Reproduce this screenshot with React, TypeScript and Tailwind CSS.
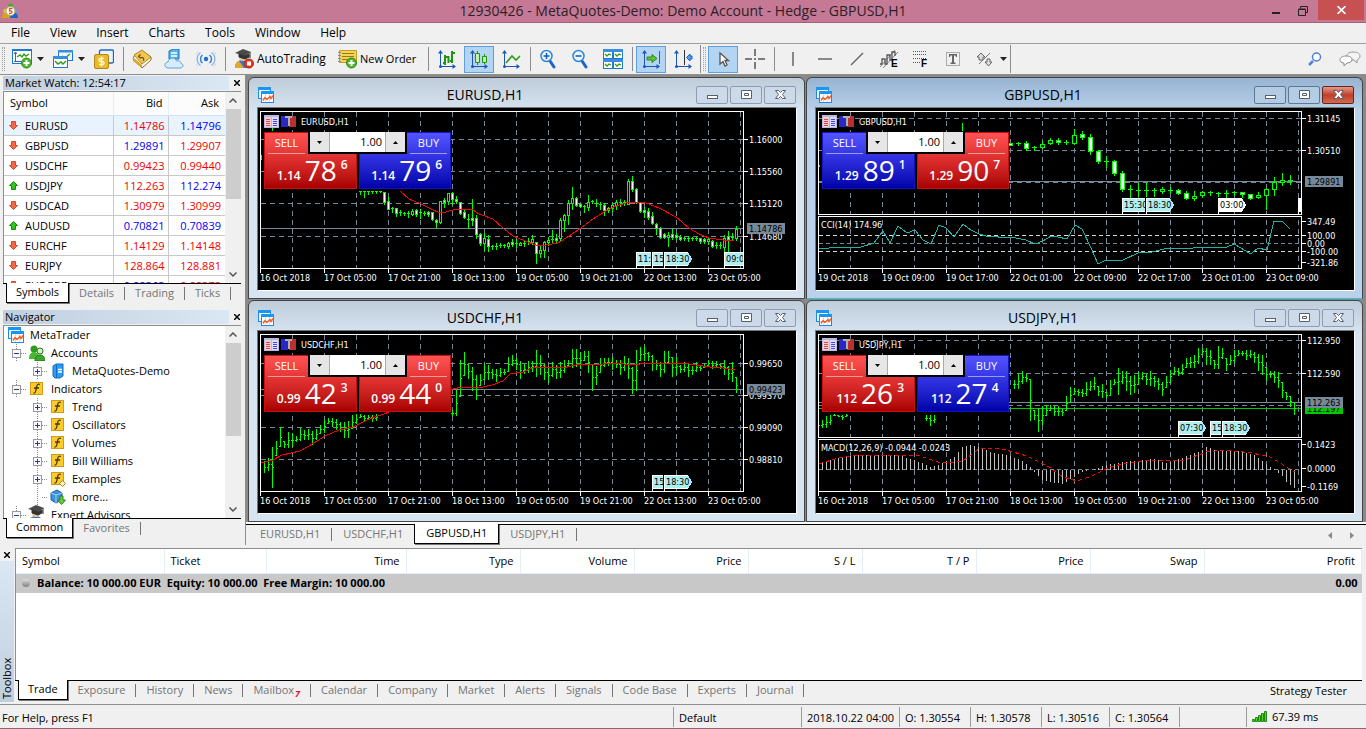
import React, { useState } from 'react';

type Candle = [high: number, low: number, top: number, bottom: number, bull?: 1];
type Bar = [high: number, low: number];

interface Tag {
  x: number;
  y: number;
  w: number;
  label: string;
  white?: boolean;
}

interface ChartInfo {
  symbol: string;
  active?: boolean;
  times: string[];
  hLines: number[];
  labels: [number, string][];
  priceY: number;
  price: string;
  sell: [string, string, string, 'red' | 'blue'];
  buy: [string, string, string, 'red' | 'blue'];
  tags: Tag[];
}

/* ---------- chart data, in plot units ---------- */

const H1_TIMES = ['16 Oct 2018', '17 Oct 05:00', '17 Oct 21:00', '18 Oct 13:00', '19 Oct 05:00', '19 Oct 21:00', '22 Oct 13:00', '23 Oct 05:00'];

const EURUSD: Candle[] = [
  [83, 86, 83, 84], [83, 89, 83, 84], [83, 86, 83, 84], [83, 85, 83, 84], [83, 85, 83, 84], [83, 84, 83, 84],
  [84, 96, 84, 94], [89, 101, 93, 101], [99, 104, 100, 101], [100, 108, 100, 105], [102, 107, 104, 105], [104, 107, 105, 106],
  [103, 109, 105, 106, 1], [101, 107, 103, 106, 1], [101, 108, 102, 106], [101, 110, 104, 105, 1], [103, 107, 105, 106], [103, 108, 104, 106],
  [104, 112, 104, 111], [111, 119, 112, 114], [93, 115, 93, 114, 1], [90, 99, 92, 94], [85, 96, 85, 93, 1], [84, 96, 85, 91],
  [88, 95, 91, 93], [94, 106, 94, 105], [101, 110, 104, 109], [106, 120, 111, 112], [91, 117, 110, 112], [107, 130, 110, 126],
  [125, 137, 126, 135], [125, 142, 130, 135, 1], [127, 143, 131, 138], [137, 141, 138, 139], [135, 141, 138, 139, 1], [135, 139, 137, 138],
  [136, 139, 137, 138], [134, 140, 135, 138, 1], [131, 138, 134, 136], [131, 139, 135, 136], [134, 137, 135, 137, 1], [133, 138, 135, 136],
  [130, 136, 133, 134], [127, 136, 131, 134, 1], [134, 155, 134, 145], [138, 149, 142, 145, 1], [133, 149, 134, 142, 1], [129, 137, 132, 134, 1],
  [122, 135, 131, 132], [126, 134, 130, 132], [110, 133, 112, 130, 1], [106, 123, 107, 112, 1], [92, 116, 95, 107, 1], [79, 101, 90, 95, 1],
  [89, 98, 90, 97], [95, 99, 96, 98], [97, 104, 98, 99], [87, 102, 94, 99, 1], [92, 95, 93, 94], [91, 98, 95, 96],
  [94, 101, 96, 97], [95, 107, 97, 102], [99, 104, 100, 102], [95, 103, 97, 100, 1], [92, 101, 94, 97, 1], [91, 98, 94, 95],
  [92, 97, 94, 95], [71, 96, 73, 96, 1], [68, 83, 73, 81], [80, 95, 81, 94], [94, 104, 94, 103], [99, 109, 102, 104],
  [100, 111, 103, 109], [104, 116, 108, 115], [115, 126, 116, 120], [119, 130, 120, 129], [125, 130, 126, 129], [124, 138, 127, 129, 1],
  [121, 131, 126, 129], [125, 131, 127, 129], [127, 132, 129, 131], [129, 132, 130, 131], [128, 133, 130, 131], [129, 132, 130, 131],
  [129, 132, 130, 131], [130, 135, 130, 133], [130, 135, 131, 133], [129, 136, 131, 133, 1], [132, 139, 133, 138], [134, 140, 137, 138],
  [134, 140, 137, 138], [127, 143, 130, 139, 1], [123, 143, 128, 131], [125, 132, 129, 130], [118, 132, 121, 130, 1],
];

const EURUSD_MA = '142,83 151,91 163,96 175,102 180,104 188,104 198,101 215,102 221,106 235,111 245,120 255,128 267,133 278,137 288,137 300,135 311,128 323,120 335,111 346,104 358,98 368,95 378,94 388,95 401,100 418,109 431,120 441,126 451,130 465,132 476,132';

const GBPUSD: Candle[] = [
  [35, 37, 35, 37], [34, 37, 35, 36], [33, 42, 35, 40], [38, 42, 39, 40], [33, 40, 36, 39, 1], [30, 36, 32, 35, 1], [30, 36, 32, 34],
  [32, 36, 34, 35], [21, 36, 27, 35, 1], [23, 31, 26, 29], [26, 46, 29, 43], [42, 55, 43, 53], [48, 59, 53, 54], [52, 67, 53, 65],
  [63, 83, 65, 81], [77, 89, 81, 82], [75, 88, 82, 83], [74, 88, 82, 83], [80, 88, 82, 83], [79, 85, 81, 83, 1], [79, 85, 82, 83],
  [81, 86, 82, 85], [83, 91, 85, 90], [83, 92, 88, 90, 1], [83, 89, 84, 87, 1], [83, 87, 84, 85], [84, 88, 85, 86], [82, 89, 85, 86],
  [83, 87, 84, 85], [84, 89, 84, 86], [86, 91, 86, 90], [84, 90, 87, 89, 1], [80, 101, 81, 87, 1], [69, 87, 74, 81, 1], [65, 77, 72, 74, 1], [67, 76, 72, 73],
];

const CCI = '3,141 13,140 23,139 45,139 58,135 67,123 74,135 82,118 91,125 99,122 107,132 115,136 123,117 130,120 138,129 147,116 155,122 163,126 170,128 178,128 187,130 195,129 210,132 219,136 227,133 235,128 242,129 251,131 259,117 266,121 275,140 282,156 290,152 307,152 322,145 336,144 352,140 364,140 371,141 384,139 397,139 404,140 411,139 418,136 435,146 442,140 451,142 458,113 466,113 474,121';

const USDCHF_LEFT: Bar[] = [
  [129, 132], [130, 141], [127, 139], [116, 156], [110, 124], [96, 115], [110, 116], [101, 116], [102, 115], [105, 110],
  [97, 109], [99, 108], [98, 108], [100, 113], [98, 108], [94, 102], [89, 101], [87, 92], [87, 95], [88, 98],
  [91, 100], [91, 106], [90, 106], [84, 97], [83, 92], [83, 86], [84, 89], [84, 88], [84, 90], [83, 89],
];

const USDCHF_RIGHT: Bar[] = [
  [79, 84], [59, 84], [29, 65], [21, 44], [33, 47], [36, 59], [44, 68], [43, 54], [33, 48], [34, 48], [38, 47], [38, 50],
  [37, 45], [38, 43], [26, 40], [24, 34], [27, 38], [30, 47], [33, 42], [30, 41], [30, 40], [19, 45], [24, 43], [33, 48],
  [36, 51], [31, 45], [34, 47], [31, 46], [29, 41], [29, 34], [18, 36], [18, 35], [21, 37], [20, 29], [20, 41], [33, 59],
  [35, 53], [27, 41], [27, 35], [27, 34], [26, 38], [29, 36], [29, 43], [25, 39], [27, 47], [36, 62], [19, 59], [16, 29],
  [15, 29], [21, 29], [24, 39], [29, 38], [31, 45], [20, 41], [20, 31], [26, 45], [26, 43], [34, 41], [31, 40], [33, 45],
  [35, 43], [31, 40], [34, 39], [33, 36], [29, 34], [30, 37], [30, 36], [33, 37], [29, 43], [35, 48], [31, 50], [46, 61],
];

const USDCHF_MA = '3,132 15,129 24,124 42,120 56,112 67,105 81,99 95,96 109,89 123,84 195,58 204,56 220,57 234,54 245,50 252,43 265,41 274,37 292,36 309,36 322,33 333,34 358,32 374,34 390,32 413,32 431,33 452,36 465,37 477,39';

const USDJPY_RIGHT: Bar[] = [
  [49, 57], [43, 57], [40, 52], [43, 50], [48, 89], [79, 88], [77, 100], [75, 93], [74, 84], [74, 79], [75, 84], [75, 84],
  [78, 84], [65, 79], [56, 71], [57, 63], [58, 64], [58, 65], [51, 64], [50, 59], [46, 58], [55, 64], [53, 66], [61, 66],
  [49, 64], [48, 53], [37, 63], [40, 52], [40, 59], [45, 63], [44, 61], [41, 53], [41, 48], [43, 53], [40, 54], [45, 55],
  [47, 58], [51, 64], [45, 56], [39, 51], [36, 43], [37, 44], [33, 43], [27, 36], [26, 36], [24, 36], [17, 32], [17, 23],
  [17, 33], [19, 33], [29, 37], [15, 37], [17, 27], [27, 39], [24, 33], [19, 31], [19, 24], [20, 24], [19, 28], [19, 26],
  [21, 31], [23, 39], [24, 43], [36, 49], [40, 46], [40, 51], [41, 56], [51, 66], [61, 68], [65, 75], [71, 83],
];

// key points of the MACD histogram: [bar index, y]
const MACD_KEYS: [number, number][] = [
  [0, 134], [3, 129], [7, 125], [12, 124], [20, 124], [24, 129], [26, 132], [28, 136], [30, 134], [34, 126], [36, 116], [38, 114],
  [40, 116], [43, 121], [48, 125], [51, 130], [53, 136], [54, 141], [56, 149], [58, 151], [61, 153], [63, 148], [66, 141], [69, 138],
  [71, 135], [76, 131], [84, 128], [87, 132], [90, 128], [92, 125], [95, 121], [97, 116], [100, 120], [105, 120], [109, 124],
  [112, 133], [114, 138], [116, 145], [117, 151], [119, 157],
];

const MACD_SIGNAL = '3,133 22,127 44,124 79,124 104,125 122,131 133,132 147,130 163,118 176,117 190,119 211,125 233,136 247,146 261,150 276,145 294,136 311,132 329,130 347,129 369,129 390,121 408,119 436,122 454,126 479,141';

const CHARTS: ChartInfo[] = [
  {
    symbol: 'EURUSD',
    times: H1_TIMES,
    hLines: [31, 63, 95, 128],
    labels: [[31, '1.16000'], [63, '1.15560'], [95, '1.15120'], [128, '1.14680']],
    priceY: 120,
    price: '1.14786',
    sell: ['1.14', '78', '6', 'red'],
    buy: ['1.14', '79', '6', 'blue'],
    tags: [
      { x: 378, y: 144, w: 15, label: '11:' },
      { x: 394, y: 144, w: 11, label: '15' },
      { x: 406, y: 144, w: 28, label: '18:30' },
      { x: 466, y: 144, w: 28, label: '09:0' },
    ],
  },
  {
    symbol: 'GBPUSD',
    active: true,
    times: ['19 Oct 2018', '19 Oct 09:00', '19 Oct 17:00', '22 Oct 01:00', '22 Oct 09:00', '22 Oct 17:00', '23 Oct 01:00', '23 Oct 09:00'],
    hLines: [10, 42, 74],
    labels: [[10, '1.31145'], [42, '1.30510'], [113, '347.49'], [127, '100.00'], [135, '0.00'], [143, '-100.00'], [154, '-321.86']],
    priceY: 73,
    price: '1.29891',
    sell: ['1.29', '89', '1', 'blue'],
    buy: ['1.29', '90', '7', 'red'],
    tags: [
      { x: 306, y: 90, w: 23, label: '15:30' },
      { x: 330, y: 90, w: 28, label: '18:30' },
      { x: 402, y: 90, w: 28, label: '03:00', white: true },
      { x: 482, y: 90, w: 20, label: '', white: true },
    ],
  },
  {
    symbol: 'USDCHF',
    times: H1_TIMES,
    hLines: [32, 64, 96, 128],
    labels: [[32, '0.99650'], [64, '0.99370'], [96, '0.99090'], [128, '0.98810']],
    priceY: 58,
    price: '0.99423',
    sell: ['0.99', '42', '3', 'red'],
    buy: ['0.99', '44', '0', 'red'],
    tags: [
      { x: 394, y: 144, w: 11, label: '15' },
      { x: 406, y: 144, w: 28, label: '18:30' },
    ],
  },
  {
    symbol: 'USDJPY',
    times: H1_TIMES,
    hLines: [9, 42, 74],
    labels: [[9, '112.950'], [42, '112.590'], [113, '0.1423'], [137, '0.0000'], [155, '-0.1169']],
    priceY: 71,
    price: '112.263',
    sell: ['112', '26', '3', 'red'],
    buy: ['112', '27', '4', 'blue'],
    tags: [
      { x: 362, y: 90, w: 28, label: '07:30' },
      { x: 394, y: 90, w: 11, label: '15' },
      { x: 406, y: 90, w: 28, label: '18:30' },
    ],
  },
];

/* ---------- icons ---------- */

const Svg: React.FC<{ size?: number; children: React.ReactNode }> = ({ size = 20, children }) => (
  <svg width={size} height={size} viewBox={`0 0 ${size} ${size}`} fill="none" className="shrink-0" aria-hidden="true">
    {children}
  </svg>
);

const AppLogo = () => (
  <Svg size={16}>
    <circle cx="8.500" cy="3" r="2.500" fill="#3fae2a" />
    <path d="M3 8c1-3 2-4 5.500-4S14 5 14 8l-2 3H5z" fill="#49b52f" />
    <circle cx="3.500" cy="8" r="2.200" fill="#e8c23a" />
    <path d="M0 15c0-3 1-5 3.500-5S8 12 8 15z" fill="#d9a514" />
    <circle cx="13" cy="8" r="2.200" fill="#4aa3ea" />
    <path d="M8 15c0-3 2-5 4.500-5S16 12 16 15z" fill="#1668c8" />
    <circle cx="8.500" cy="8" r="4.500" fill="#fff" stroke="#b8a070" />
    <path d="M10.500 5.500h-3v2.500c3-.5 3.500 2.500 0 2.500H7" stroke="#e0561a" strokeWidth="1.300" />
  </Svg>
);

const ChartMiniIcon = () => (
  <Svg size={16}>
    <rect x="0.500" y="0.500" width="12" height="11" fill="#e8f4ff" stroke="#1a8ce8" />
    <path d="M0 0h13v3H0z" fill="#1a96f0" />
    <rect x="3.500" y="4.500" width="12" height="11" fill="#fff" stroke="#1a8ce8" />
    <path d="M3 4h13v3H3z" fill="#1a96f0" />
    <path d="M7.500 7v8M11.500 7v8M4 11.500h11" stroke="#cfe0ee" />
    <path d="M5 13.500l2-3 2 2 3-3 1 2 2-3" stroke="#f0602c" strokeWidth="1.400" />
  </Svg>
);

const NewChartIcon = () => (
  <Svg>
    <rect x="0.500" y="0.500" width="19" height="14" fill="#fff" stroke="#1e78d2" />
    <path d="M0 0h20v2H0z" fill="#1e78d2" />
    <path d="M3.500 3v10M2 12.500h12M2 5l1.500-2L5 5" stroke="#3f66a8" />
    <path d="M5 8l3-2 2 2 2-3 2 2 3-2" stroke="#2f9a1c" strokeWidth="1.400" />
    <circle cx="14.500" cy="14" r="5" fill="#4fb52b" stroke="#2f8a17" />
    <path d="M14.500 11v6M11.500 14h6" stroke="#fff" strokeWidth="2" />
  </Svg>
);

const ProfilesIcon = () => (
  <Svg>
    <rect x="5.500" y="1.500" width="14" height="10" fill="#eef6ff" stroke="#1e78d2" />
    <path d="M5 1h15v2.500H5z" fill="#3a8ee0" />
    <path d="M9 7l3 2 5-4" stroke="#2f9a1c" strokeWidth="1.300" />
    <rect x="0.500" y="7.500" width="14" height="11" fill="#fff" stroke="#1e78d2" />
    <path d="M0 7h15v3H0z" fill="#3a8ee0" />
    <path d="M2 12l3 3 3-2 2 2 3-3" stroke="#2f9a1c" strokeWidth="1.500" />
  </Svg>
);

const MarketIcon = () => (
  <Svg>
    <rect x="5.500" y="1" width="14" height="13" rx="1.500" fill="#e9f4ff" stroke="#1e66c0" strokeWidth="1.300" />
    <rect x="0.500" y="5.500" width="14" height="14" rx="1.500" fill="#e9b92f" stroke="#b88414" />
    <path d="M10 9.500H6.500c-2 0-2 3 0 3h2c2 0 2 3 0 3H5M7.500 7.500v10" stroke="#fff6d0" strokeWidth="1.500" />
  </Svg>
);

const BookIcon = () => (
  <Svg>
    <path d="M1 10l1-3 8-5 9 6v3l-9 8z" fill="#fff" stroke="#8a6a18" />
    <path d="M2 6l8-5 9 7-9 7z" fill="#f0c850" stroke="#b08620" />
    <path d="M1 8v4l9 7v-3z" fill="#d8a42c" />
    <path d="M8.500 5.500l-2 2 2 1.500c2-1.500 4.500.5 2.500 2.500" stroke="#7a5410" strokeWidth="1.300" />
  </Svg>
);

const CloudIcon = () => (
  <Svg>
    <path d="M5 2l4-2h6v10H5z" fill="#58b4f2" stroke="#1670c8" />
    <path d="M7 4h6M7 7h6" stroke="#fff" strokeWidth="1.300" />
    <path d="M4.500 19C0 19-.5 13.500 4 13c1-5 7.500-5 8.500-1 3-1 4.500 1 4.500 2.500 3 .5 2.500 4.500-1 4.500z" fill="#d8edfc" stroke="#5aa2dc" />
  </Svg>
);

const SignalIcon = () => (
  <Svg>
    <circle cx="10" cy="10" r="2.200" fill="#1f6fd0" />
    <path d="M6.500 14a5 5 0 010-8M13.500 6a5 5 0 010 8" stroke="#2f7bd6" strokeWidth="1.400" />
    <path d="M4.500 16.500a8 8 0 010-13M15.500 3.500a8 8 0 010 13" stroke="#86b4e6" strokeWidth="1.300" />
    <path d="M2 17.500a10 10 0 010-15M18 2.500a10 10 0 010 15" stroke="#c3d8f0" />
  </Svg>
);

const ExpertIcon: React.FC<{ stop?: boolean }> = ({ stop }) => (
  <Svg>
    <path d="M1 19c0-5 3-8 8-8s7 4 7 8z" fill="#3b74c8" />
    <path d="M1 19c0-4 1-6 4-7l5 7z" fill="#e2a82a" />
    <circle cx="9" cy="8" r="4" fill="#e8c490" />
    <path d="M1 4l8-4 8 3-6 4z" fill="#4a4a4a" />
    <path d="M5 5l6 2 4-2v3l-4 2-6-2zM16 3v6" fill="#333" stroke="#333" />
    {stop && (
      <>
        <circle cx="15" cy="14.500" r="4.500" fill="#e03a22" stroke="#b32412" />
        <path d="M13 12.500h4v4h-4z" fill="#fff" />
      </>
    )}
  </Svg>
);

const OrderIcon = () => (
  <Svg>
    <path d="M2.500 1.500h17v12h-17z" fill="#f4d458" stroke="#c89c20" />
    <path d="M5 4.500h12M5 7.500h12M5 10.500h12" stroke="#9a7818" />
    <path d="M1 3.500h3M1 6.500h3M1 9.500h3M1 12.500h3" stroke="#8a8a8a" />
    <circle cx="14.500" cy="14" r="5" fill="#4fb52b" stroke="#2f8a17" />
    <path d="M14.500 11v6M11.500 14h6" stroke="#fff" strokeWidth="2" />
  </Svg>
);

const Axes = () => (
  <>
    <path d="M3.500 3v14.500H18" stroke="#1b55b5" />
    <path d="M1 4.500L3.500 1 6 4.500zM15.500 15l3.500 2.500-3.500 2.500z" fill="#1b55b5" />
    <circle cx="3.500" cy="17.500" r="1.500" fill="#1b55b5" />
  </>
);

const BarsIcon = () => (
  <Svg>
    <Axes />
    <path d="M8 6v10M6 14h2M8 8h2M15 2v12M13 12h2M15 4h3" stroke="#1f9410" strokeWidth="2" />
    <path d="M10 8h1.500v6" stroke="#1f9410" strokeWidth="2" />
  </Svg>
);

const CandlesIcon = () => (
  <Svg>
    <Axes />
    <path d="M8.500 2v14M15.500 5v10" stroke="#1f9410" />
    <path d="M6.500 4.500h4v9h-4zM13.500 7.500h4v6h-4z" fill="#c4f4a8" stroke="#1f9410" />
  </Svg>
);

const LineIcon = () => (
  <Svg>
    <Axes />
    <path d="M5 14l6-7 4 4 4-4" stroke="#2f9a1c" strokeWidth="1.600" />
  </Svg>
);

const ZoomIcon: React.FC<{ plus?: boolean }> = ({ plus }) => (
  <Svg>
    <path d="M11 12l4 6" stroke="#1b66c0" strokeWidth="3" strokeLinecap="round" />
    <circle cx="7.500" cy="7" r="5.500" fill="#e8f5ff" stroke="#2f86d8" strokeWidth="1.500" />
    <path d="M4.500 7h6" stroke="#1458b0" strokeWidth="1.500" />
    {plus && <path d="M7.500 4v6" stroke="#1458b0" strokeWidth="1.500" />}
  </Svg>
);

const TileIcon = () => (
  <Svg>
    {[0, 10].map((x) => [0, 10].map((y) => (
      <g key={`${x}-${y}`}>
        <rect x={x + 0.5} y={y + 0.5} width="9" height="9" fill="#fff" stroke="#1e78d2" />
        <path d={`M${x} ${y}h10v3H${x}z`} fill="#3a8ee0" />
        <path d={`M${x + 2} ${y + 5}l2 2 2-2 2 1`} stroke="#2f9a1c" strokeWidth="1.300" />
      </g>
    )))}
  </Svg>
);

const ScrollIcon = () => (
  <Svg>
    <Axes />
    <path d="M18.500 2v13" stroke="#2f7a2a" />
    <path d="M6 8h5V5.500l5 4-5 4V11H6z" fill="#58c63a" stroke="#2f8a17" />
  </Svg>
);

const ShiftIcon = () => (
  <Svg>
    <Axes />
    <path d="M11.500 1v15" stroke="#333" />
    <path d="M19 7h-2V5l-3.500 3.500L17 12v-2h2z" fill="#4f9cf0" stroke="#1b66c0" />
  </Svg>
);

const CursorIcon = () => (
  <Svg>
    <path d="M7 4v11l3-2.500 2 4.500 2-1-2-4.500h3.500z" fill="#fff" stroke="#555" strokeWidth="1.300" />
  </Svg>
);

const CrossIcon = () => (
  <Svg>
    <path d="M10 0v7M10 13v7M0 10h7M13 10h7M9 10h2" stroke="#555" strokeWidth="1.500" />
  </Svg>
);

const StrokeIcon: React.FC<{ d: string }> = ({ d }) => (
  <Svg>
    <path d={d} stroke="#666" strokeWidth="1.500" />
  </Svg>
);

const ChannelIcon = () => (
  <Svg>
    <path d="M1 18L16 1M4 19L19 3" stroke="#888" />
    <path d="M1 15h2v-5h3v5h2V6h3v5h2V3h3v4" stroke="#555" strokeWidth="1.300" />
    <text x="12" y="18" fontSize="10" fontWeight="bold" fill="#000" fontFamily="Liberation Sans">E</text>
  </Svg>
);

const FiboIcon = () => (
  <Svg>
    <path d="M2 2.500h14M2 5.500h14M2 9.500h14M2 13.500h7" stroke="#555" strokeDasharray="1 1" />
    <text x="10" y="18" fontSize="10" fontWeight="bold" fill="#000" fontFamily="Liberation Sans">F</text>
  </Svg>
);

const TextIcon = () => (
  <Svg>
    <rect x="3.500" y="3.500" width="13" height="13" stroke="#666" strokeDasharray="1 1" />
    <path d="M6 5h8v3h-1l-.5-1.500H11v7h1.500V15h-5v-1.500H9v-7H7.500L7 8H6z" fill="#666" />
  </Svg>
);

const ShapesIcon = () => (
  <Svg>
    <path d="M2 8l4-4 4 4H8v3H4V8zM10 13h2v-3h3v3h2l-3.500 4z" fill="#ddd" stroke="#666" />
    <path d="M4 15L15 4" stroke="#777" />
  </Svg>
);

const SearchIcon = () => (
  <Svg size={16}>
    <path d="M2 14l4-4" stroke="#4f7fd8" strokeWidth="2.500" />
    <circle cx="9.500" cy="6" r="4" fill="#fff" stroke="#4f7fd8" strokeWidth="1.500" />
  </Svg>
);

const ChatIcon = () => (
  <svg width="22" height="16" viewBox="0 0 22 16" fill="none" aria-hidden="true">
    <path d="M14 1c5 0 7 2 7 4s-2 4-3 4v3l-3-3h-3C6 9 6 1 14 1z" fill="#f4f4f4" stroke="#999" />
    <path d="M7 5c4 0 6 1.500 6 3.500S11 12 8 12l-3 3v-3c-3 0-4-2-4-3.500S3 5 7 5z" fill="#fff" stroke="#888" />
  </svg>
);

const DropArrow = () => (
  <svg width="7" height="4" viewBox="0 0 7 4" aria-hidden="true" className="shrink-0">
    <path d="M0 0h7L3.500 4z" fill="#222" />
  </svg>
);

const FolderF: React.FC<{ custom?: boolean }> = ({ custom }) => (
  <Svg size={16}>
    <rect x="1.500" y="1.500" width="12" height="12" fill="#fbcb2c" stroke="#d09c18" />
    <path d="M11 3.500c-2-.8-3 .2-3.300 2L6.700 10c-.3 1.800-1 2.200-2.200 2M5 7h5" stroke="#4a3a08" strokeWidth="1.300" />
    {custom && <path d="M12.500 9.500l3 3-3 3-3-3z" fill="#fff7c8" stroke="#a88410" />}
  </Svg>
);

const AccountsIcon = () => (
  <Svg size={16}>
    <circle cx="5" cy="4" r="3.500" fill="#2f9a20" />
    <path d="M0 14c0-5 2-7 5-7s5 2 5 7z" fill="#48b834" />
    <circle cx="11" cy="6" r="3" fill="#d8ecd0" stroke="#1f7a14" />
    <path d="M6 16c0-4 2-6 5-6s5 2 5 6z" fill="#3aa828" stroke="#1f7a14" />
  </Svg>
);

const ServerIcon = () => (
  <Svg size={16}>
    <path d="M3 3l3-2h7v12l-3 2H5l-2-2z" fill="#2b9cf0" stroke="#0f6cc0" />
    <path d="M6.500 2v13" stroke="#0f6cc0" />
    <path d="M8 6.500h4M8 9h4" stroke="#fff" strokeWidth="1.300" />
  </Svg>
);

const MoreIcon = () => (
  <Svg size={16}>
    <path d="M1 4l6-3 5 3v7l-6 3-5-3z" fill="#3e92dc" stroke="#1a60a8" />
    <path d="M1 4l5 2 6-2M6 6v8" stroke="#9cd0f8" />
    <path d="M10 7h3v4h2.500l-4 4.500-4-4.500H10z" fill="#6cc83e" stroke="#2f8a17" />
  </Svg>
);

/* ---------- top bars ---------- */

const ToolButton: React.FC<{ label: string; active?: boolean; children: React.ReactNode }> = ({ label, active, children }) => (
  <button
    type="button"
    aria-label={label}
    className={`flex h-[27px] w-[30px] shrink-0 items-center justify-center border ${active ? 'border-[#5f9fdc] bg-[#b3d4f2]' : 'border-transparent'}`}
  >
    {children}
  </button>
);

const Sep = () => <span className="mr-px ml-0.5 h-6 w-px shrink-0 bg-[#8c8c8c]" />;

const Grip = () => <span className="h-6 w-[3px] shrink-0 border-x border-dotted border-[#a0a0a0]" />;

const TitleBar = () => (
  <header className="flex h-[23px] shrink-0 items-center border-b border-[#a5607a] bg-[#c57995]">
    <div className="w-[124px] pl-0.5"><AppLogo /></div>
    <h1 className="flex-1 text-center text-sm leading-5 text-[#2c2028]">12930426 - MetaQuotes-Demo: Demo Account - Hedge - GBPUSD,H1</h1>
    <div className="flex h-full w-[124px] justify-end pr-0.5">
      <button type="button" aria-label="Minimize" className="flex w-6 items-center justify-center">
        <svg width="8" height="10" viewBox="0 0 8 10"><path d="M0 6h8v2H0z" fill="#222" /></svg>
      </button>
      <button type="button" aria-label="Restore" className="flex w-[30px] items-center justify-center">
        <svg width="10" height="10" viewBox="0 0 10 10" fill="none" stroke="#222"><path d="M2.500 2.500v-2h7v6h-2M.5 3.500h7v6h-7zM.5 3h7" /></svg>
      </button>
      <button type="button" aria-label="Close" className="mb-0.5 flex w-[46px] items-center justify-center bg-[#c75050]">
        <svg width="9" height="8" viewBox="0 0 9 8"><path d="M.5 0l8 8M8.500 0l-8 8" stroke="#fff" strokeWidth="1.600" /></svg>
      </button>
    </div>
  </header>
);

const MENU = ['File', 'View', 'Insert', 'Charts', 'Tools', 'Window', 'Help'];

const Toolbar = () => (
  <div className="flex h-[31px] shrink-0 items-center gap-0.5 border-b border-[#8e8e8e] pl-0.5">
    <Grip />
    <button type="button" aria-label="New chart" className="flex h-[27px] w-[39px] items-center gap-[5px] pl-[5px]"><NewChartIcon /><DropArrow /></button>
    <button type="button" aria-label="Profiles" className="flex h-[27px] w-[39px] items-center gap-[5px] pl-[5px]"><ProfilesIcon /><DropArrow /></button>
    <ToolButton label="Market watch"><MarketIcon /></ToolButton>
    <Sep />
    <ToolButton label="Navigator"><BookIcon /></ToolButton>
    <ToolButton label="Cloud"><CloudIcon /></ToolButton>
    <ToolButton label="Signals"><SignalIcon /></ToolButton>
    <Sep />
    <button type="button" className="flex h-[27px] w-[101px] shrink-0 items-center gap-[3px] pl-[5px] text-xs"><ExpertIcon stop />AutoTrading</button>
    <button type="button" className="flex h-[27px] w-[92px] shrink-0 items-center gap-[3px] pl-[5px] whitespace-nowrap"><OrderIcon />New Order</button>
    <Sep />
    <ToolButton label="Bar chart"><BarsIcon /></ToolButton>
    <ToolButton label="Candlesticks" active><CandlesIcon /></ToolButton>
    <ToolButton label="Line chart"><LineIcon /></ToolButton>
    <Sep />
    <ToolButton label="Zoom in"><ZoomIcon plus /></ToolButton>
    <ToolButton label="Zoom out"><ZoomIcon /></ToolButton>
    <ToolButton label="Tile windows"><TileIcon /></ToolButton>
    <Sep />
    <ToolButton label="Auto scroll" active><ScrollIcon /></ToolButton>
    <ToolButton label="Chart shift"><ShiftIcon /></ToolButton>
    <span className="h-7 w-px shrink-0 bg-[#8c8c8c]" />
    <Grip />
    <ToolButton label="Cursor" active><CursorIcon /></ToolButton>
    <ToolButton label="Crosshair"><CrossIcon /></ToolButton>
    <Sep />
    <ToolButton label="Vertical line"><StrokeIcon d="M10 3v14" /></ToolButton>
    <ToolButton label="Horizontal line"><StrokeIcon d="M3 10h14" /></ToolButton>
    <ToolButton label="Trend line"><StrokeIcon d="M4 16L16 4" /></ToolButton>
    <ToolButton label="Equidistant channel"><ChannelIcon /></ToolButton>
    <ToolButton label="Fibonacci"><FiboIcon /></ToolButton>
    <ToolButton label="Text"><TextIcon /></ToolButton>
    <button type="button" aria-label="Shapes" className="flex h-[27px] w-[38px] shrink-0 items-center gap-[5px] pl-[5px]"><ShapesIcon /><DropArrow /></button>
    <span className="h-7 w-px shrink-0 bg-[#8c8c8c]" />
    <div className="ml-auto flex items-center gap-4 pr-[5px]">
      <button type="button" aria-label="Search"><SearchIcon /></button>
      <button type="button" aria-label="Chat"><ChatIcon /></button>
    </div>
  </div>
);

/* ---------- side panels ---------- */

const PanelTitle: React.FC<{ title: string }> = ({ title }) => (
  <div className="flex h-4 shrink-0 items-center">
    <h2 className="h-[14px] flex-1 bg-linear-to-r from-[#c0cfdf] to-[#dae7f4] pl-0.5 text-[11px] leading-[14px]">{title}</h2>
    <button type="button" aria-label={`Close ${title}`} className="flex w-4 justify-center">
      <svg width="6" height="6" viewBox="0 0 6 6"><path d="M0 0l6 6M6 0L0 6" stroke="#000" strokeWidth="1.500" /></svg>
    </button>
  </div>
);

const ScrollBar: React.FC<{ thumb: string }> = ({ thumb }) => (
  <div className="flex w-4 shrink-0 flex-col items-center bg-[#f0f0f0] py-1.5">
    <svg width="8" height="5" viewBox="0 0 8 5" fill="none"><path d="M.5 4.500L4 1l3.500 3.500" stroke="#555" strokeWidth="1.500" /></svg>
    <div className={`mt-1.5 w-[15px] bg-[#cdcdcd] ${thumb}`} />
    <svg width="8" height="5" viewBox="0 0 8 5" fill="none" className="mt-auto"><path d="M.5.5L4 4 7.500.5" stroke="#555" strokeWidth="1.500" /></svg>
  </div>
);

interface TabsProps {
  items: string[];
  value: string;
  onPick: (v: string) => void;
  badge?: string;
  wide?: boolean;
}

const Tabs: React.FC<TabsProps> = ({ items, value, onPick, badge, wide }) => (
  <div className="flex h-[19px]">
    {items.map((item, i) => {
      const on = item === value;
      const beforeOn = items[i + 1] === value;
      return (
        <button
          key={item}
          type="button"
          onClick={() => onPick(item)}
          className={on
            ? `-mt-px flex h-5 items-center border border-t-0 border-black bg-white shadow-[1px_1px_0_#777] ${wide ? 'px-[11px]' : 'px-[9px]'}`
            : 'flex h-[19px] items-center text-[#757575]'}
        >
          {on ? item : (
            <span className={`flex h-[13px] items-center ${wide ? 'px-[11px]' : 'px-[10px]'} ${beforeOn ? '' : 'border-r border-[#757575]'}`}>
              {item}
              {badge && item === 'Mailbox' && <b className="pt-1.5 pl-px text-[9px] text-[#e81123] italic">{badge}</b>}
            </span>
          )}
        </button>
      );
    })}
  </div>
);

type Quote = [string, 'up' | 'down', string, 'red' | 'blue', string, 'red' | 'blue'];

const QUOTES: Quote[] = [
  ['EURUSD', 'down', '1.14786', 'red', '1.14796', 'blue'],
  ['GBPUSD', 'down', '1.29891', 'blue', '1.29907', 'red'],
  ['USDCHF', 'down', '0.99423', 'red', '0.99440', 'red'],
  ['USDJPY', 'up', '112.263', 'red', '112.274', 'blue'],
  ['USDCAD', 'down', '1.30979', 'red', '1.30999', 'red'],
  ['AUDUSD', 'up', '0.70821', 'blue', '0.70839', 'blue'],
  ['EURCHF', 'down', '1.14129', 'red', '1.14148', 'red'],
  ['EURJPY', 'down', '128.864', 'red', '128.881', 'red'],
  ['EURGBP', 'down', '0.88363', 'blue', '0.88373', 'red'],
];

const QUOTE_COLOR = { red: 'text-[#f00000]', blue: 'text-[#0000f0]' };

const MarketWatch = () => {
  const [tab, setTab] = useState('Symbols');
  return (
    <section className="flex min-h-0 flex-[231] flex-col pl-[3px]">
      <PanelTitle title="Market Watch: 12:54:17" />
      <div className="mr-1 flex min-h-0 flex-1 overflow-hidden border-t border-l border-[#8e8e8e] bg-white">
        <table className="h-max flex-1 table-fixed border-collapse">
          <thead>
            <tr className="h-[23px] border-b border-[#cfe0f0] bg-[#fcfcfc]">
              <th className="w-[109px] border-r border-[#e4eefa] pl-1.5 text-left font-normal">Symbol</th>
              <th className="w-[55px] border-r border-[#e4eefa] pr-[5px] text-right font-normal">Bid</th>
              <th className="pr-1.5 text-right font-normal">Ask</th>
            </tr>
          </thead>
          <tbody>
            {QUOTES.map(([sym, dir, bid, bidColor, ask, askColor], i) => (
              <tr key={sym} className={`h-5 border-b border-[#c8c8c8] ${i === 0 ? 'bg-[#e8f3fd]' : ''}`}>
                <td className="border-r border-[#c8c8c8] pl-[5px]">
                  <span className="flex items-center gap-[7px] leading-[19px]">
                    <svg width="9" height="9" viewBox="0 0 9 9" aria-hidden="true">
                      {dir === 'up'
                        ? <path d="M4.500.5L8.500 4.500H6.500v4h-4v-4H.5z" fill="#2fc41e" stroke="#158a0a" />
                        : <path d="M4.500 8.500L8.500 4.500H6.500v-4h-4v4H.5z" fill="#f4694a" stroke="#d04a2a" />}
                    </svg>
                    {sym}
                  </span>
                </td>
                <td className={`border-r border-[#c8c8c8] pr-[3px] text-right leading-[19px] ${QUOTE_COLOR[bidColor]}`}>{bid}</td>
                <td className={`pr-1 text-right leading-[19px] ${QUOTE_COLOR[askColor]}`}>{ask}</td>
              </tr>
            ))}
          </tbody>
        </table>
        <ScrollBar thumb="h-[90px]" />
      </div>
      <div className="mr-1 h-[23px] shrink-0 border-t border-black pl-[3px]">
        <Tabs items={['Symbols', 'Details', 'Trading', 'Ticks']} value={tab} onPick={setTab} />
      </div>
    </section>
  );
};

const TREE: { label: string; level: 0 | 1 | 2; sign?: string; icon: React.ReactNode }[] = [
  { label: 'MetaTrader', level: 0, icon: <ChartMiniIcon /> },
  { label: 'Accounts', level: 1, sign: '-', icon: <AccountsIcon /> },
  { label: 'MetaQuotes-Demo', level: 2, sign: '+', icon: <ServerIcon /> },
  { label: 'Indicators', level: 1, sign: '-', icon: <FolderF /> },
  { label: 'Trend', level: 2, sign: '+', icon: <FolderF /> },
  { label: 'Oscillators', level: 2, sign: '+', icon: <FolderF /> },
  { label: 'Volumes', level: 2, sign: '+', icon: <FolderF /> },
  { label: 'Bill Williams', level: 2, sign: '+', icon: <FolderF /> },
  { label: 'Examples', level: 2, sign: '+', icon: <FolderF custom /> },
  { label: 'more...', level: 2, icon: <MoreIcon /> },
  { label: 'Expert Advisors', level: 1, sign: '-', icon: <ExpertIcon /> },
];

const LEVEL_PAD = { 0: 'pl-1', 1: 'pl-2', 2: 'pl-[29px]' };

const Navigator = () => {
  const [tab, setTab] = useState('Common');
  return (
    <section className="flex min-h-0 flex-[236] flex-col pl-[3px]">
      <PanelTitle title="Navigator" />
      <div className="mr-1 flex min-h-0 flex-1 overflow-hidden border-t border-l border-[#8e8e8e] bg-white">
        <ul className="flex-1">
          {TREE.map(({ label, level, sign, icon }) => (
            <li key={label} className={`flex h-[18px] items-center ${LEVEL_PAD[level]}`}>
              {level > 0 && (
                <svg width="17" height="18" viewBox="0 0 17 18" fill="none" className="shrink-0" aria-hidden="true">
                  <path d="M4.500 0v18M9 9.500h6" stroke="#888" strokeDasharray="1 1" />
                  {sign && <rect x="0.500" y="5.500" width="8" height="8" fill="#fafafa" stroke="#9a9a9a" />}
                  {sign && <path d={sign === '+' ? 'M2 9.500h5M4.500 7v5' : 'M2 9.500h5'} stroke="#1f3f9a" />}
                </svg>
              )}
              <span className="flex w-4 shrink-0 justify-center">{icon}</span>
              <span className="pl-1.5">{label}</span>
            </li>
          ))}
        </ul>
        <ScrollBar thumb="h-[93px]" />
      </div>
      <div className="mr-1 h-[27px] shrink-0 border-t border-black pl-[3px]">
        <Tabs items={['Common', 'Favorites']} value={tab} onPick={setTab} />
      </div>
    </section>
  );
};

/* ---------- chart windows ---------- */

const barX = (i: number, step = 4) => 2.5 + i * step;

const Candles: React.FC<{ data: Candle[]; first: number; step: number; body: number }> = ({ data, first, step, body }) => (
  <g stroke="#00ff00">
    {data.map(([h, l, t, b, bull], i) => {
      const x = barX(first + i, step);
      return (
        <g key={i}>
          <path d={`M${x} ${h}V${l + 1}`} />
          {b - t <= 1
            ? <path d={`M${x - body / 2 - 0.5} ${t + 0.5}h${body + 1}`} />
            : <rect x={x - body / 2} y={t + 0.5} width={body} height={b - t} fill={bull ? '#000' : '#fff'} />}
        </g>
      );
    })}
  </g>
);

const Bars: React.FC<{ data: Bar[]; first: number }> = ({ data, first }) => (
  <g stroke="#00ff00">
    {data.map(([h, l], i) => {
      const x = barX(first + i);
      const prev = data[i - 1] ?? data[i];
      const open = Math.min(Math.max(Math.round((prev[0] + prev[1]) / 2), h), l);
      const close = Math.round((h + l) / 2);
      return <path key={i} d={`M${x} ${h}V${l + 1}M${x - 1.5} ${open + 0.5}h1M${x + 0.5} ${close + 0.5}h1`} />;
    })}
  </g>
);

const macdY = (i: number) => {
  const k = Math.max(1, MACD_KEYS.findIndex(([x]) => x >= i));
  const [x0, y0] = MACD_KEYS[k - 1];
  const [x1, y1] = MACD_KEYS[k];
  return Math.round(y0 + ((y1 - y0) * (i - x0)) / (x1 - x0));
};

const Series: React.FC<{ symbol: string }> = ({ symbol }) => {
  switch (symbol) {
    case 'EURUSD':
      return (
        <>
          <path d="M3.500 47v5M14.500 18v5" stroke="#00ff00" />
          <Candles data={EURUSD} first={25} step={4} body={2} />
          <polyline points={EURUSD_MA} stroke="#ff0000" />
        </>
      );
    case 'GBPUSD':
      return (
        <>
          <path d="M146.500 15v8M3.500 57v2" stroke="#00ff00" />
          <Candles data={GBPUSD} first={24} step={8} body={4} />
          <path d="M3 127.500h482M3 143.500h482" stroke="#d8d8d8" strokeDasharray="4 3" />
          <path d="M3 135.500h482" stroke="#778899" strokeDasharray="4 3" />
          <polyline points={CCI} stroke="#20b2aa" />
        </>
      );
    case 'USDCHF':
      return (
        <>
          <Bars data={USDCHF_LEFT} first={0} />
          <Bars data={USDCHF_RIGHT} first={48} />
          <polyline points={USDCHF_MA} stroke="#ff0000" />
        </>
      );
    default:
      return (
        <>
          <Bars data={[[92, 95], [89, 96], [85, 96], [84, 93], [83, 84], [84, 85], [84, 88], [83, 85]]} first={0} />
          <Bars data={[[84, 89], [84, 94], [84, 91]]} first={27} />
          <path d="M3 77.500h482" stroke="#00c800" />
          <Bars data={USDJPY_RIGHT} first={49} />
          <path d="M3 138.500h482" stroke="#778899" strokeDasharray="4 3" />
          <g stroke="#c0c0c0">
            {Array.from({ length: 120 }, (_, i) => (
              <path key={i} d={`M${barX(i)} 138.500V${macdY(i)}`} />
            ))}
          </g>
          <polyline points={MACD_SIGNAL} stroke="#ff0000" strokeDasharray="4 3" />
        </>
      );
  }
};

const INDICATOR: Record<string, string> = {
  GBPUSD: 'CCI(14) 174.96',
  USDJPY: 'MACD(12,26,9) -0.0944 -0.0243',
};

const EventTag: React.FC<{ tag: Tag }> = ({ tag: { x, y, w, label, white } }) => {
  const tip = w > 25 ? 4 : 0;
  const flat = w - tip;
  return (
    <g>
      <path d={`M${x} ${y}h${flat}l${tip} 7l-${tip} 7h-${flat}z`} fill={white ? '#fff' : '#afeeee'} />
      <path d={`M${x + 0.5} ${y}v17M${x} ${y + 0.5}h${flat}M${x} ${y + 13.5}h${flat}`} stroke="#fff" />
      <text x={x + 2} y={y + 10} fill="#000">{label}</text>
    </g>
  );
};

const Plot: React.FC<{ chart: ChartInfo }> = ({ chart }) => {
  const sub = INDICATOR[chart.symbol];
  const clip = `plot-${chart.symbol}`;
  return (
    <svg width="538" height="181" viewBox="0 0 538 181" fill="none" shapeRendering="crispEdges" fontSize="9" className="font-['DejaVu_Sans_Condensed','DejaVu_Sans',sans-serif]">
      <clipPath id={clip}><path d="M2 3h483v158H2z" /></clipPath>
      <g clipPath={`url(#${clip})`}>
        <g stroke="#778899" strokeDasharray="5 4">
          {Array.from({ length: 15 }, (_, i) => (
            <path key={i} d={`M${34.5 + i * 32} 4V160`} />
          ))}
          {chart.hLines.map((y) => <path key={y} d={`M3 ${y + 0.5}h482`} />)}
        </g>
        <path d={`M3 ${chart.priceY + 0.5}h482`} stroke="#778899" />
        <Series symbol={chart.symbol} />
        {chart.tags.map((tag) => <EventTag key={tag.x} tag={tag} />)}
      </g>
      {sub && <path d="M2 107h484v1H2z" fill="#000" />}
      <path d={sub ? 'M2.500 3.500h483v103h-483zM2.500 108.500h483v52h-483z' : 'M2.500 3.500h483v157h-483z'} stroke="#fff" />
      {chart.times.map((t, i) => (
        <g key={t}>
          <path d={`M${2.5 + i * 64} 161v4`} stroke="#fff" />
          <text x={2 + i * 64} y="173" fill="#fff">{t}</text>
        </g>
      ))}
      {chart.labels.map(([y, t]) => (
        <g key={t}>
          <path d={`M486 ${y + 0.5}h4`} stroke="#fff" />
          <text x="491" y={y + 4} fill="#fff">{t}</text>
        </g>
      ))}
      {chart.symbol === 'USDJPY' && (
        <>
          <path d="M489 72h38v11h-38z" fill="#00c800" />
          <text x="491" y="81" fill="#000">112.197</text>
        </>
      )}
      <path d={`M489 ${chart.priceY - 5}h38v11h-38z`} fill="#778899" />
      <text x="491" y={chart.priceY + 4} fill="#000">{chart.price}</text>
      {sub && <text x="5" y="120" fill="#fff">{sub}</text>}
      <path d="M6 7h15v13H6z" fill="#b8b8e0" />
      <path d="M7 9h6v10H7z" fill="#f4d0d0" />
      <path d="M14 9h6v10h-6z" fill="#dcdcfa" />
      <path d="M8 11.500h4M8 13.500h4M8 15.500h4M8 17.500h4" stroke="#e04848" />
      <path d="M15 11.500h4M15 13.500h4M15 15.500h4M15 17.500h4" stroke="#4848e0" />
      <path d="M23 8h7v11h-7z" fill="#2828c8" />
      <path d="M31 8h7v11h-7z" fill="#b83030" />
      <path d="M27 8h7v2h-2v8h-2v-8h-3z" fill="#b0b0b8" />
      <text x="43" y="17" fill="#fff">{chart.symbol},H1</text>
    </svg>
  );
};

const DEAL_COLOR = {
  red: 'border-[#c80f0f] from-[#ff5252] via-[#dc2c2c] to-[#a80000]',
  blue: 'border-[#1414c0] from-[#5454ff] via-[#2c2cdc] to-[#0000a8]',
};

const DealButton: React.FC<{ side: 'SELL' | 'BUY'; deal: [string, string, string, 'red' | 'blue'] }> = ({ side, deal }) => {
  const [head, big, small, color] = deal;
  return (
    <button type="button" className={`flex flex-1 flex-col border bg-linear-to-b text-white ${DEAL_COLOR[color]} ${side === 'BUY' ? 'items-end' : 'items-start'}`}>
      <span className="mx-[3px] h-[21px] w-[37px] border-b border-white/50 text-center leading-5">{side}</span>
      <span className="flex w-full items-end justify-center gap-1 pl-1">
        <b className="pb-[3px] text-xs leading-[14px] font-semibold">{head}</b>
        <span className="text-[28px] leading-8">{big}</span>
        <b className="self-start pt-1 text-xs leading-[14px] font-semibold">{small}</b>
      </span>
    </button>
  );
};

const WindowButton: React.FC<{ label: string; tone: string; children: React.ReactNode }> = ({ label, tone, children }) => (
  <button type="button" aria-label={label} className={`flex h-[18px] w-8 items-center justify-center rounded-xs border ${tone}`}>
    <svg width="11" height="10" viewBox="0 0 11 10" fill="#fff" stroke="#55606e">{children}</svg>
  </button>
);

const ChartWindow: React.FC<{ chart: ChartInfo }> = ({ chart }) => {
  const { symbol, active } = chart;
  const tone = active ? 'border-[#5f7894] bg-[#b4cbe4]' : 'border-[#8e9db4] bg-[#cbd9e8]';
  return (
    <article
      className={`flex min-h-0 min-w-0 flex-col rounded-t-md border border-[#454545] bg-linear-to-b pr-[7px] pb-[7px] pl-2 ${active ? 'border-b-[#2cc4dc] from-[#98b4d2] via-[#b9d1ea] via-15% to-[#b9d1ea]' : 'from-[#bfcddb] via-[#d7e4f2] via-15% to-[#d7e4f2]'}`}
    >
      <div className="flex h-[29px] shrink-0 items-center px-px pt-1">
        <ChartMiniIcon />
        <h3 className="flex-1 text-center text-sm leading-5">{symbol},H1</h3>
        <div className="flex gap-0.5">
          <WindowButton label="Minimize" tone={tone}><rect x="0.500" y="5.500" width="10" height="3" /></WindowButton>
          <WindowButton label="Maximize" tone={tone}><path d="M.5.5h10v8H.5z" /><path d="M3.500 3.500h4v2h-4z" /></WindowButton>
          <WindowButton label="Close" tone={active ? 'border-[#6c2318] bg-linear-to-b from-[#e0988a] via-[#bf3f2a] to-[#cf6a50]' : tone}>
            <path d="M.5.5h3l2 2 2-2h3L7.500 4.500l3 4h-3l-2-2-2 2h-3l3-4z" />
          </WindowButton>
        </div>
      </div>
      <div className="relative min-h-0 flex-1 overflow-hidden border border-t-[#777] border-r-white border-b-white border-l-[#777] bg-black">
        <Plot chart={chart} />
        <div className="absolute top-6 left-1.5 flex h-[57px] w-[187px] gap-0.5 bg-black">
          <DealButton side="SELL" deal={chart.sell} />
          <DealButton side="BUY" deal={chart.buy} />
          <div className="absolute top-0 left-11 flex h-[22px] w-[99px] bg-black px-0.5 pb-0.5">
            <button type="button" aria-label="Decrease volume" className="flex w-[19px] items-center justify-center bg-[#e6e6e6]">
              <svg width="5" height="3" viewBox="0 0 5 3"><path d="M0 0h5L2.500 3z" /></svg>
            </button>
            <input aria-label={`${symbol} volume`} defaultValue="1.00" className="w-0 flex-1 border-x border-[#aaa] bg-white pr-[3px] text-right text-[11px] text-black outline-none" />
            <button type="button" aria-label="Increase volume" className="flex w-[19px] items-center justify-center bg-[#e6e6e6]">
              <svg width="5" height="3" viewBox="0 0 5 3"><path d="M0 3h5L2.500 0z" /></svg>
            </button>
          </div>
        </div>
      </div>
    </article>
  );
};

/* ---------- bottom area ---------- */

const COLUMNS: [string, string][] = [
  ['Symbol', 'w-[148px] text-left'],
  ['Ticket', 'w-[102px] text-left'],
  ['Time', 'w-[140px] text-right'],
  ['Type', 'w-[114px] text-right'],
  ['Volume', 'w-[114px] text-right'],
  ['Price', 'w-[114px] text-right'],
  ['S / L', 'w-[114px] text-right'],
  ['T / P', 'w-[114px] text-right'],
  ['Price', 'w-[114px] text-right'],
  ['Swap', 'w-[114px] text-right'],
  ['Profit', 'text-right'],
];

const TOOLBOX_TABS = ['Trade', 'Exposure', 'History', 'News', 'Mailbox', 'Calendar', 'Company', 'Market', 'Alerts', 'Signals', 'Code Base', 'Experts', 'Journal'];

const Toolbox = () => {
  const [tab, setTab] = useState('Trade');
  return (
    <section className="flex h-[159px] shrink-0 pt-[3px]">
      <div className="flex w-[15px] shrink-0 flex-col pb-0.5">
        <button type="button" aria-label="Close toolbox" className="flex h-[13px] items-center pl-1">
          <svg width="6" height="6" viewBox="0 0 6 6"><path d="M0 0l6 6M6 0L0 6" stroke="#000" strokeWidth="1.500" /></svg>
        </button>
        <h2 className="w-[14px] flex-1 rotate-180 bg-linear-to-b from-[#c0cfdf] to-[#dae7f4] pt-[3px] text-[11px] leading-[14px] [writing-mode:vertical-rl]">Toolbox</h2>
      </div>
      <div className="flex min-w-0 flex-1 flex-col pr-1">
        <div className="flex-1 border-t border-l border-[#8e8e8e] bg-white">
          <table className="w-full table-fixed border-collapse">
            <thead>
              <tr className="h-6 border-b border-[#e4eefa]">
                {COLUMNS.map(([name, cls], i) => (
                  <th key={i} className={`border-r border-[#e4eefa] px-1.5 font-normal ${cls}`}>{name}</th>
                ))}
              </tr>
            </thead>
            <tbody>
              <tr className="h-5 bg-[#c8c8c8] font-bold">
                <td colSpan={10} className="pl-1.5">
                  <span className="flex items-center gap-[7px] whitespace-pre">
                    <span className="size-2 rounded-full bg-linear-to-b from-[#e0e0e0] to-[#808080]" />
                    {'Balance: 10 000.00 EUR  Equity: 10 000.00  Free Margin: 10 000.00'}
                  </span>
                </td>
                <td className="pr-1 text-right">0.00</td>
              </tr>
            </tbody>
          </table>
        </div>
        <div className="flex h-6 shrink-0 items-start justify-between border-t border-black pr-[15px] pl-[3px]">
          <Tabs items={TOOLBOX_TABS} value={tab} onPick={setTab} badge="7" />
          <button type="button" className="h-5">Strategy Tester</button>
        </div>
      </div>
    </section>
  );
};

const StatusBar = () => (
  <footer className="flex h-[25px] shrink-0 items-center border-t border-b border-t-[#8e8e8e] border-b-[#8c6474] whitespace-nowrap *:h-5 *:leading-[21px] [&>span]:border-l [&>span]:border-[#9a9a9a] [&>span]:pl-[5px]">
    <p className="flex-1 pl-0.5">For Help, press F1</p>
    <span className="w-32">Default</span>
    <span className="w-[98px]">2018.10.22 04:00</span>
    <span className="w-[71px]">O: 1.30554</span>
    <span className="w-[71px]">H: 1.30578</span>
    <span className="w-[68px]">L: 1.30516</span>
    <span className="w-[70px]">C: 1.30564</span>
    <span className="w-[67px]" />
    <span className="flex w-[120px] items-center gap-[5px]">
      <svg width="15" height="11" viewBox="0 0 15 11" fill="#5fd02c" stroke="#1f8a10" aria-hidden="true">
        <path d="M.5 8.500h2v2h-2zM3.500 6.500h2v4h-2zM6.500 4.500h2v6h-2zM9.500 2.500h2v8h-2zM12.500.5h2v10h-2z" />
      </svg>
      67.39 ms
    </span>
  </footer>
);

export default function App() {
  const [chartTab, setChartTab] = useState('GBPUSD,H1');

  return (
    <div className="flex h-screen min-h-[600px] min-w-[1100px] flex-col overflow-hidden bg-[#f0f0f0] font-['Open_Sans','Noto_Sans',sans-serif] text-[11px] text-black">
      <TitleBar />
      <nav className="flex h-[21px] shrink-0 items-center border-b border-[#a0a0a0] pl-px text-xs">
        {MENU.map((item) => (
          <button key={item} type="button" className="px-[10px]">{item}</button>
        ))}
      </nav>
      <Toolbar />

      <main className="flex min-h-0 flex-1">
        <aside className="flex w-[246px] shrink-0 flex-col gap-[3px] border-r border-[#8e8e8e]">
          <MarketWatch />
          <Navigator />
        </aside>
        <div className="flex min-w-0 flex-1 flex-col">
          <div className="grid min-h-0 flex-1 grid-cols-2 grid-rows-2 gap-px bg-[#8a8a8a] pt-0.5 pr-[3px] pl-0.5">
            {CHARTS.map((chart) => <ChartWindow key={chart.symbol} chart={chart} />)}
          </div>
          <div className="h-[23px] shrink-0 border-t-2 border-white">
            <div className="flex h-full items-start justify-between border-t border-black pl-[3px]">
              <Tabs items={['EURUSD,H1', 'USDCHF,H1', 'GBPUSD,H1', 'USDJPY,H1']} value={chartTab} onPick={setChartTab} wide />
              <div className="flex h-5 items-center gap-[18px] pr-3">
                <button type="button" aria-label="Scroll tabs left"><svg width="4" height="7" viewBox="0 0 4 7"><path d="M4 0v7L0 3.500z" fill="#888" /></svg></button>
                <button type="button" aria-label="Scroll tabs right"><svg width="4" height="7" viewBox="0 0 4 7"><path d="M0 0v7l4-3.500z" fill="#888" /></svg></button>
              </div>
            </div>
          </div>
        </div>
      </main>

      <Toolbox />
      <StatusBar />
    </div>
  );
}
